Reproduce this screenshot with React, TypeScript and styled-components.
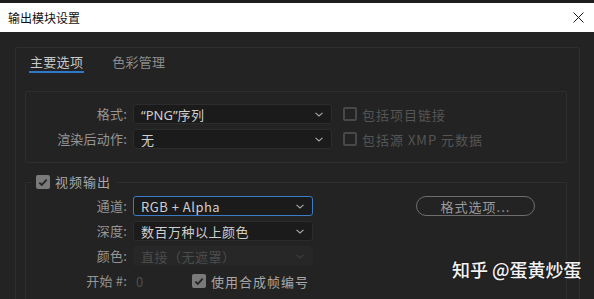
import React from 'react';
import styled, { createGlobalStyle } from 'styled-components';

const GlobalStyle = createGlobalStyle`
  html, body {
    margin: 0;
    padding: 0;
    background: #232323;
    overflow: hidden;
  }
  * {
    box-sizing: border-box;
  }
`;

const Window = styled.div`
  position: relative;
  width: 594px;
  height: 299px;
  overflow: hidden;
  display: flex;
  flex-direction: column;
  background: #232323;
  font-family: "Noto Sans CJK SC", "Microsoft YaHei", sans-serif;
  font-size: 13px;
  color: #9b9b9b;
`;

const TopStrip = styled.div`
  height: 3px;
  background: #1d1d1d;
`;

const TitleBar = styled.div`
  height: 29px;
  background: #ffffff;
  display: flex;
  align-items: center;
  justify-content: space-between;
  padding: 0 10px 0 8px;
`;

const TitleText = styled.span`
  font-size: 12px;
  color: #111;
`;

const Body = styled.div`
  flex: 1;
  min-height: 0;
  display: flex;
  padding: 15px 14px 0 15px;
`;

const Panel = styled.div`
  flex: 1;
  border: 1px solid #2f2f2f;
  border-bottom: none;
  border-radius: 3px 3px 0 0;
  padding: 0 12px 0 9px;
  display: flex;
  flex-direction: column;
`;

const Tabs = styled.div`
  display: flex;
  gap: 27px;
  margin: 5px 0 0 4px;
`;

const Tab = styled.div<{ $active?: boolean }>`
  line-height: 18px;
  padding: 0 1px;
  font-size: 13px;
  letter-spacing: 0.3px;
  color: ${({ $active }) => ($active ? '#c9c9c9' : '#8c8c8c')};
  border-bottom: 2px solid ${({ $active }) => ($active ? '#2f78c9' : 'transparent')};
`;

const Group = styled.div`
  margin-top: 18px;
  border: 1px solid #2e2e2e;
  border-radius: 2px;
  padding: 12px 0 13px 0;
  display: grid;
  grid-template-columns: 101px 199px auto;
  column-gap: 6px;
  row-gap: 5px;
  align-items: center;
`;

const Label = styled.div`
  text-align: right;
  line-height: 20px;
  letter-spacing: 0.2px;
  white-space: nowrap;
  color: #959595;
`;

const Select = styled.div<{ $focus?: boolean; $disabled?: boolean }>`
  height: 20px;
  display: flex;
  align-items: center;
  justify-content: space-between;
  padding: 0 8px 0 7px;
  border-radius: 3px;
  border: 1px solid
    ${({ $focus, $disabled }) => ($focus ? '#3a7cc8' : $disabled ? '#272727' : '#2c2c2c')};
  background: ${({ $disabled }) => ($disabled ? '#272727' : '#1b1b1b')};
  color: ${({ $disabled }) => ($disabled ? '#4c4c4c' : '#cfcfcf')};
  white-space: nowrap;
  letter-spacing: 0.5px;
`;

const Latin = styled.span`
  font-family: "Noto Sans", "Open Sans", sans-serif;
  letter-spacing: 0;
`;

const Chevron = ({ dim }: { dim?: boolean }) => (
  <svg width="8" height="5" viewBox="0 0 8 5">
    <path d="M0.5 0.8 L4 4 L7.5 0.8" fill="none" stroke={dim ? '#3e3e3e' : '#a8a8a8'} strokeWidth="1.1" />
  </svg>
);

const CheckRow = styled.div<{ $disabled?: boolean; $inset?: boolean }>`
  display: flex;
  align-items: center;
  gap: 5px;
  margin-left: ${({ $inset }) => ($inset ? '5px' : '0')};
  white-space: nowrap;
  letter-spacing: 1px;
  color: ${({ $disabled }) => ($disabled ? '#555555' : '#a8a8a8')};
`;

const Box = styled.span<{ $checked?: boolean }>`
  width: 14px;
  height: 14px;
  border-radius: 2px;
  flex-shrink: 0;
  display: flex;
  align-items: center;
  justify-content: center;
  background: ${({ $checked }) => ($checked ? '#7a7a7a' : 'transparent')};
  border: ${({ $checked }) => ($checked ? 'none' : '2px solid #484848')};
`;

const Tick = () => (
  <svg width="10" height="9" viewBox="0 0 10 9">
    <path d="M1.3 4.6 L3.8 7 L8.7 1.6" fill="none" stroke="#262626" strokeWidth="1.9" />
  </svg>
);

const Fieldset = styled.fieldset`
  margin: 12px 0 0 0;
  border: 1px solid #2e2e2e;
  border-bottom: none;
  border-radius: 2px 2px 0 0;
  padding: 7px 0 0 0;
  min-width: 0;
  flex: 1;
`;

const Legend = styled.legend`
  margin-left: 6px;
  padding: 0 6px 0 4px;
  display: flex;
  align-items: center;
  gap: 5px;
  line-height: 14px;
  letter-spacing: 1px;
  color: #a8a8a8;
`;

const VideoGrid = styled.div`
  display: grid;
  grid-template-columns: 101px 180px auto;
  column-gap: 6px;
  row-gap: 5px;
  align-items: center;
`;

const PillButton = styled.div`
  margin-left: 97px;
  width: 119px;
  height: 20px;
  border: 1px solid #6e6e6e;
  border-radius: 10px;
  display: flex;
  align-items: center;
  justify-content: center;
  color: #9a9a9a;
  letter-spacing: 1px;
`;

const StartRow = styled.div`
  display: flex;
  align-items: center;
  height: 20px;
`;

const StartValue = styled.span`
  width: 59px;
  padding-left: 3px;
  color: #4e4e4e;
`;

const Watermark = styled.div`
  position: absolute;
  left: 452px;
  top: 256px;
  font-size: 18px;
  font-weight: 500;
  color: #f2f2f2;
  white-space: nowrap;
  text-shadow: 0 0 2px rgba(0, 0, 0, 0.6);
`;

const App: React.FC = () => {
  return (
    <Window>
      <GlobalStyle />
      <TopStrip />
      <TitleBar>
        <TitleText>输出模块设置</TitleText>
        <svg width="11" height="11" viewBox="0 0 11 11">
          <path d="M0.5 0.5 L10.5 10.5 M10.5 0.5 L0.5 10.5" stroke="#1a1a1a" strokeWidth="1" />
        </svg>
      </TitleBar>
      <Body>
        <Panel>
          <Tabs>
            <Tab $active>主要选项</Tab>
            <Tab>色彩管理</Tab>
          </Tabs>

          <Group>
            <Label>格式:</Label>
            <Select>
              <span>
                <Latin>“PNG”</Latin>序列
              </span>
              <Chevron />
            </Select>
            <CheckRow $disabled $inset>
              <Box />
              包括项目链接
            </CheckRow>

            <Label>渲染后动作:</Label>
            <Select>
              <span>无</span>
              <Chevron />
            </Select>
            <CheckRow $disabled $inset>
              <Box />
              包括源 XMP 元数据
            </CheckRow>
          </Group>

          <Fieldset>
            <Legend>
              <Box $checked>
                <Tick />
              </Box>
              视频输出
            </Legend>
            <VideoGrid>
              <Label>通道:</Label>
              <Select $focus>
                <span>RGB + Alpha</span>
                <Chevron />
              </Select>
              <PillButton>格式选项...</PillButton>

              <Label>深度:</Label>
              <Select>
                <span>数百万种以上颜色</span>
                <Chevron />
              </Select>
              <span />

              <Label>颜色:</Label>
              <Select $disabled>
                <span>直接（无遮罩）</span>
                <Chevron dim />
              </Select>
              <span />

              <Label>开始 #:</Label>
              <StartRow>
                <StartValue>0</StartValue>
                <CheckRow>
                  <Box $checked>
                    <Tick />
                  </Box>
                  使用合成帧编号
                </CheckRow>
              </StartRow>
            </VideoGrid>
          </Fieldset>
        </Panel>
      </Body>
      <Watermark>知乎 @蛋黄炒蛋</Watermark>
    </Window>
  );
};

export default App;
